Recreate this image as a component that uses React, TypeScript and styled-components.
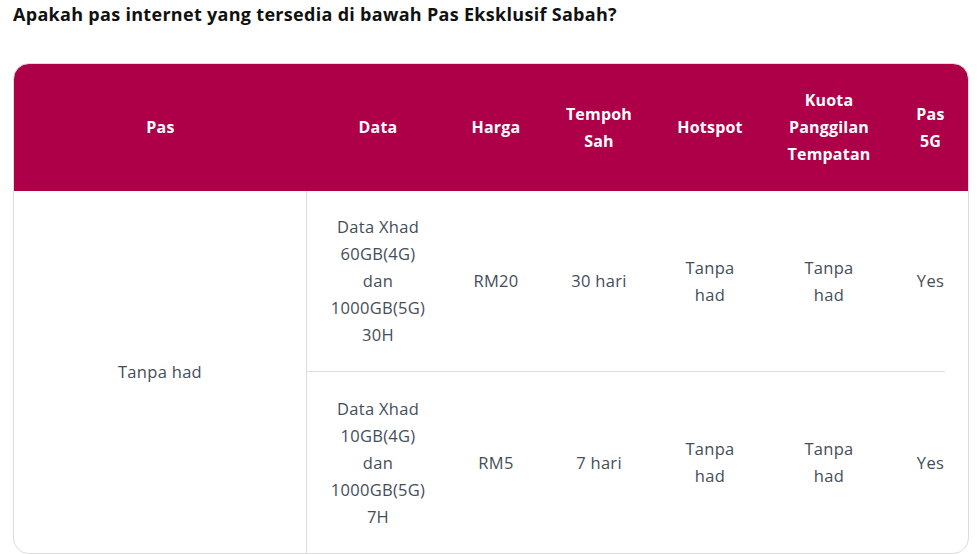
import React from "react";
import styled, { createGlobalStyle } from "styled-components";

const Global = createGlobalStyle`
  html, body { margin: 0; padding: 0; background: #fff; }
  body { font-family: "Open Sans", Lato, Arial, sans-serif; }
`;

const Page = styled.div`
  padding: 0 10px 0 13px;
  width: 978px;
  box-sizing: border-box;
`;

const Title = styled.h2`
  margin: 0;
  padding-top: 2px;
  font-size: 18px;
  line-height: 24px;
  font-weight: 700;
  color: #111;
  letter-spacing: 0.3px;
`;

const Card = styled.div`
  margin-top: 37px;
  width: 956px;
  box-sizing: border-box;
  border: 1px solid #dcdcdc;
  border-radius: 16px;
  overflow: hidden;
  background: linear-gradient(#ae0048 0 127px, #fff 127px);
`;

const Table = styled.table`
  width: 954px;
  border-collapse: separate;
  border-spacing: 0;
  table-layout: fixed;
`;

const Th = styled.th<{ $w: number }>`
  width: ${(p) => p.$w}px;
  height: 127px;
  padding: 0 14px;
  box-sizing: border-box;
  color: #fff;
  font-size: 16px;
  font-weight: 700;
  line-height: 27px;
  text-align: center;
  vertical-align: middle;
  letter-spacing: 0.2px;
`;

const Td = styled.td<{ $left?: boolean; $sep?: boolean; $partial?: boolean }>`
  height: 181px;
  padding: 0 10px 1px;
  box-sizing: border-box;
  color: #454d5a;
  font-size: 16.5px;
  line-height: 27px;
  text-align: center;
  vertical-align: middle;
  letter-spacing: 0.3px;
  border-right: ${(p) => (p.$left ? "1px solid #dcdcdc" : "none")};
  border-bottom: ${(p) => (p.$sep ? "1px solid #dcdcdc" : p.$partial ? "1px solid transparent" : "none")};
  background: ${(p) =>
    p.$partial ? "linear-gradient(#dcdcdc,#dcdcdc) left bottom / 52px 1px no-repeat border-box" : "none"};
`;

const cols = [
  { label: "Pas", w: 293 },
  { label: "Data", w: 142 },
  { label: "Harga", w: 94 },
  { label: "Tempoh Sah", w: 112 },
  { label: "Hotspot", w: 110 },
  { label: "Kuota Panggilan Tempatan", w: 128 },
  { label: "Pas 5G", w: 75 },
];

const rows = [
  { data: ["Data Xhad", "60GB(4G)", "dan", "1000GB(5G)", "30H"], harga: "RM20", tempoh: "30 hari" },
  { data: ["Data Xhad", "10GB(4G)", "dan", "1000GB(5G)", "7H"], harga: "RM5", tempoh: "7 hari" },
];

export default function App() {
  return (
    <>
      <Global />
      <Page>
        <Title>Apakah pas internet yang tersedia di bawah Pas Eksklusif Sabah?</Title>
        <Card>
          <Table>
            <thead>
              <tr>
                {cols.map((c) => (
                  <Th key={c.label} $w={c.w}>
                    {c.label}
                  </Th>
                ))}
              </tr>
            </thead>
            <tbody>
              {rows.map((r, i) => {
                const first = i === 0;
                return (
                  <tr key={i}>
                    {first && (
                      <Td $left rowSpan={2}>
                        Tanpa had
                      </Td>
                    )}
                    <Td $sep={first}>
                      {r.data.map((l, j) => (
                        <div key={j}>{l}</div>
                      ))}
                    </Td>
                    <Td $sep={first}>{r.harga}</Td>
                    <Td $sep={first}>{r.tempoh}</Td>
                    <Td $sep={first}>
                      Tanpa
                      <br />
                      had
                    </Td>
                    <Td $sep={first}>
                      Tanpa
                      <br />
                      had
                    </Td>
                    <Td $partial={first}>Yes</Td>
                  </tr>
                );
              })}
            </tbody>
          </Table>
        </Card>
      </Page>
    </>
  );
}
